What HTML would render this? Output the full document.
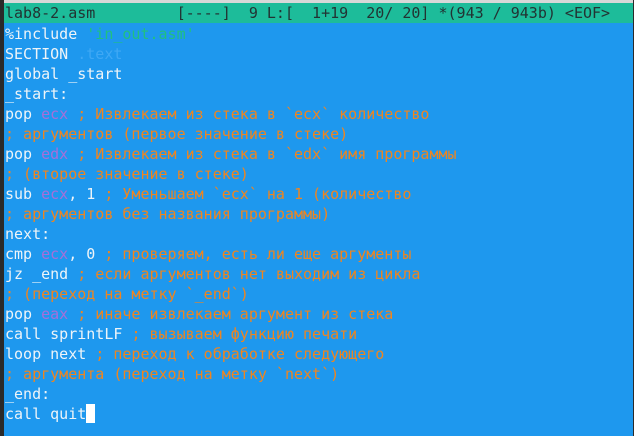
<!DOCTYPE html>
<html><head><meta charset="utf-8"><style>
html,body{margin:0;padding:0;}
body{width:634px;height:436px;background:#1e98ee;position:relative;overflow:hidden;font-family:"DejaVu Sans Mono","Liberation Mono",monospace;font-size:15px;}
#top{position:absolute;left:0;top:0;width:634px;height:3px;background:#d8d8d8;}
#lb{position:absolute;left:0;top:0;width:4px;height:436px;background:#2a2a2a;}
#rb{position:absolute;right:0;top:0;width:1px;height:436px;background:#2a2a2a;}
#hdr{position:absolute;left:4px;top:3px;width:629px;height:20px;background:#1dbc9a;color:#233;}
pre{margin:0;font:inherit;line-height:20px;white-space:pre;}
#hdr pre{padding-left:1px;}
#txt{position:absolute;left:5px;top:24px;color:#eef4f8;}
.o{color:#f0851e}.r{color:#a66fd8}.s{color:#20c080}.d{color:#3fa8f4}
.cur{background:#fff;display:inline-block;width:9px;height:19px;vertical-align:top}
</style></head><body>
<div id="top"></div><div id="lb"></div><div id="rb"></div>
<div id="hdr"><pre>lab8-2.asm         [----]  9 L:[  1+19  20/ 20] *(943 / 943b) &lt;EOF&gt;</pre></div>
<div id="txt"><pre>%include <span class="s">'in_out.asm'</span>
SECTION <span class="d">.text</span>
global _start
_start:
pop <span class="r">ecx</span> <span class="o">; Извлекаем из стека в `ecx` количество</span>
<span class="o">; аргументов (первое значение в стеке)</span>
pop <span class="r">edx</span> <span class="o">; Извлекаем из стека в `edx` имя программы</span>
<span class="o">; (второе значение в стеке)</span>
sub <span class="r">ecx</span>, 1 <span class="o">; Уменьшаем `ecx` на 1 (количество</span>
<span class="o">; аргументов без названия программы)</span>
next:
cmp <span class="r">ecx</span>, 0 <span class="o">; проверяем, есть ли еще аргументы</span>
jz _end <span class="o">; если аргументов нет выходим из цикла</span>
<span class="o">; (переход на метку `_end`)</span>
pop <span class="r">eax</span> <span class="o">; иначе извлекаем аргумент из стека</span>
call sprintLF <span class="o">; вызываем функцию печати</span>
loop next <span class="o">; переход к обработке следующего</span>
<span class="o">; аргумента (переход на метку `next`)</span>
_end:
call quit<span class="cur"></span></pre></div>
</body></html>
